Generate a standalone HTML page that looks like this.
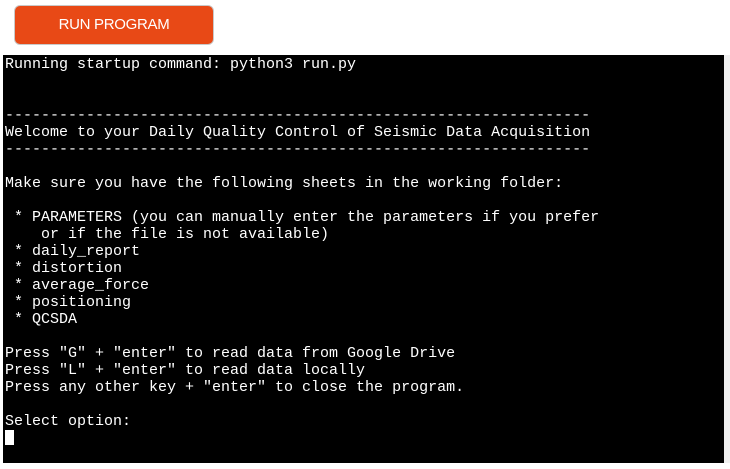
<!DOCTYPE html>
<html><head><style>
html,body{margin:0;padding:0;background:#fff;width:730px;height:469px;overflow:hidden}
.btn{position:absolute;left:14px;top:5px;width:198px;height:38px;background:#e84916;border:1px solid #c9c9c9;border-radius:6px;color:#fff;font:15px "Liberation Sans",sans-serif;text-align:center;line-height:38px;letter-spacing:-0.3px}
.term{position:absolute;left:3px;top:55px;width:721px;height:408px;background:#000}
pre{margin:0;position:absolute;left:2px;top:1px;color:#fff;font:15px/17px "Liberation Mono",monospace}
.sb{position:absolute;left:724px;top:55px;width:6px;height:408px;background:#f0f0f0}
.cur{display:inline-block;width:9px;height:15px;background:#fff;vertical-align:-3px}
</style></head><body>
<div class="btn">RUN PROGRAM</div>
<div class="term"><pre>Running startup command: python3 run.py


-----------------------------------------------------------------
Welcome to your Daily Quality Control of Seismic Data Acquisition
-----------------------------------------------------------------

Make sure you have the following sheets in the working folder:

 * PARAMETERS (you can manually enter the parameters if you prefer
    or if the file is not available)
 * daily_report
 * distortion
 * average_force
 * positioning
 * QCSDA

Press "G" + "enter" to read data from Google Drive
Press "L" + "enter" to read data locally
Press any other key + "enter" to close the program.

Select option:
<span class="cur"></span></pre></div>
<div class="sb"></div>
</body></html>
